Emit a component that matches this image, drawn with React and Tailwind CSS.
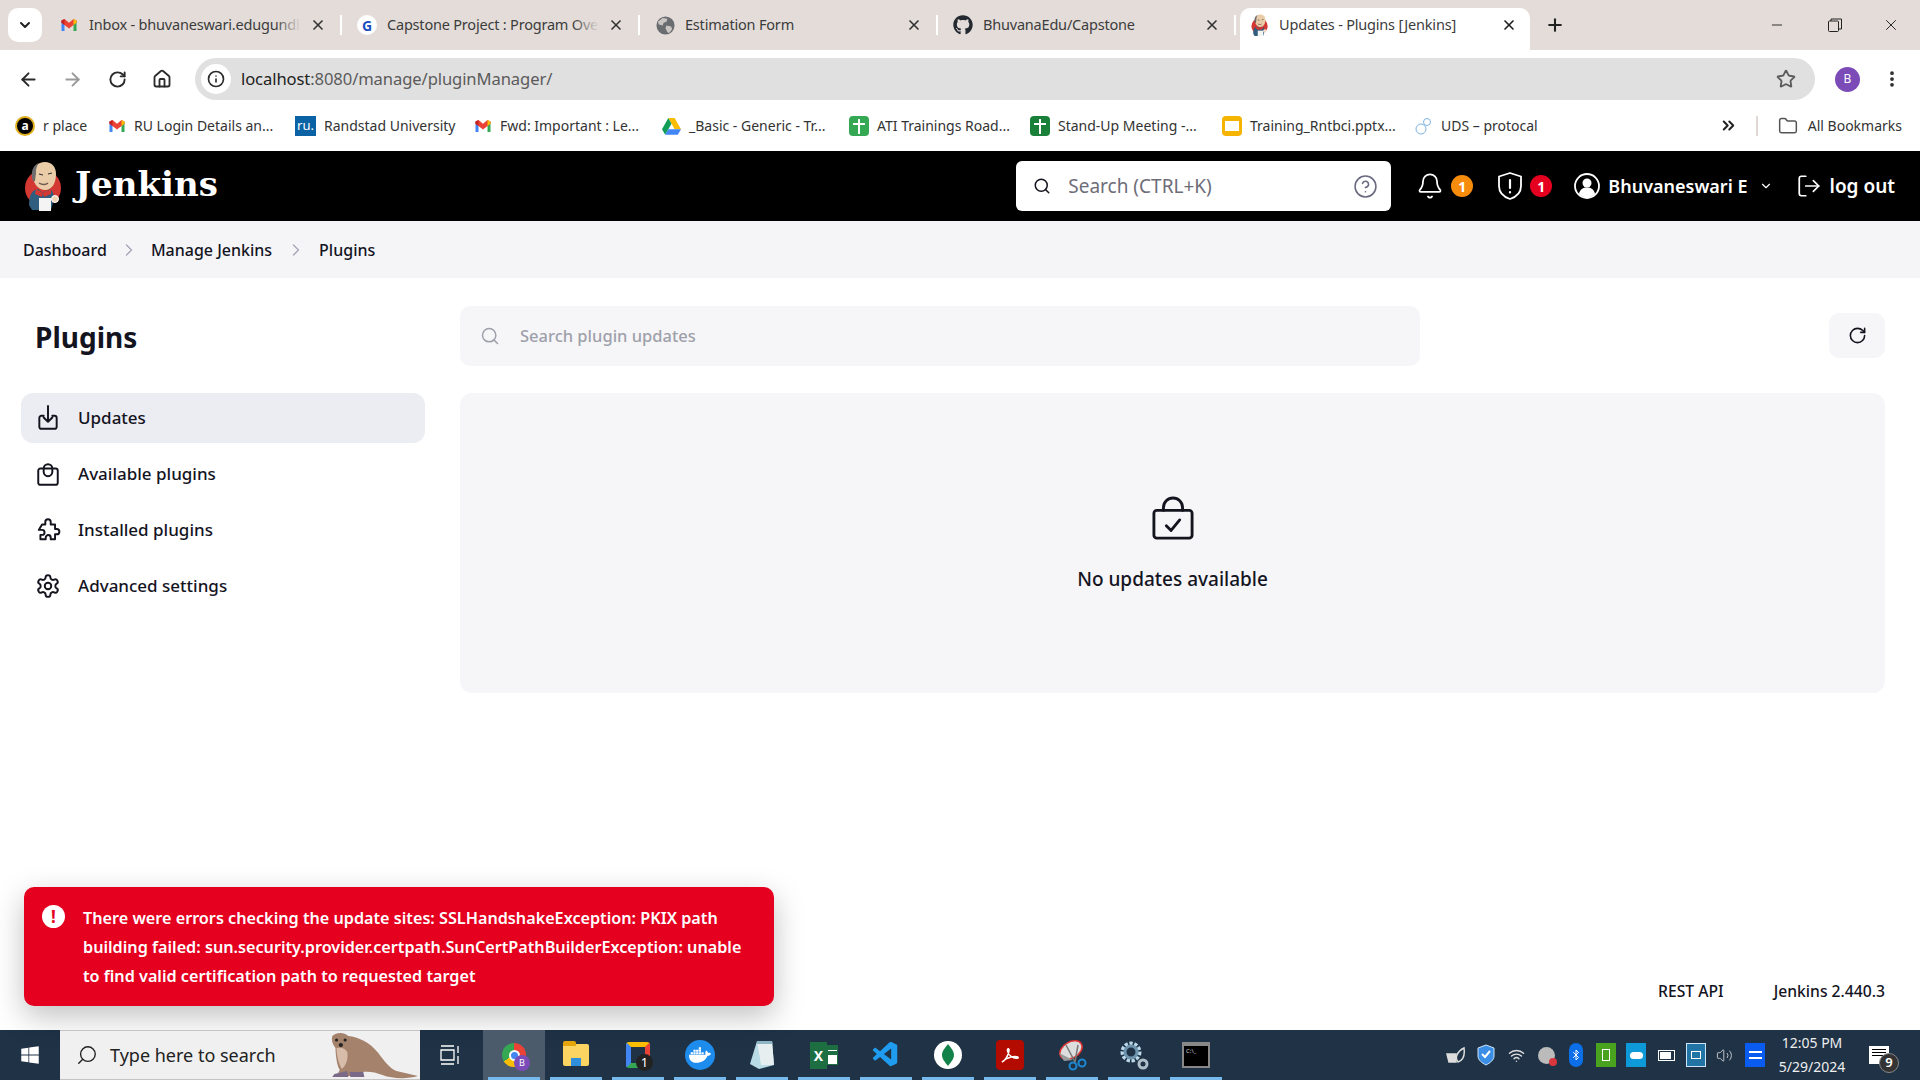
import React from 'react';
import { ArrowLeft, ArrowRight, RotateCw, Home, Info, Star, X, Plus, Minus, ChevronDown, ChevronRight, ChevronsRight, EllipsisVertical, Folder, Search, CircleHelp, Bell, LogOut, Wifi, Volume2, Bluetooth } from 'lucide-react';
import { FaGithub, FaWindows, FaDocker } from 'react-icons/fa';
import { VscVscode } from 'react-icons/vsc';

function GmailIcon({ size = 18 }) {
  return (
    <svg width={size} height={size} viewBox="0 0 24 24" className="shrink-0">
      <path d="M2 6v14h4V10z" fill="#4285f4" />
      <path d="M22 6v14h-4V10z" fill="#34a853" />
      <path d="M2 6l4-2 6 5 6-5 4 2v3l-4 3-6 4.500-6-4.500-4-3z" fill="#ea4335" />
      <path d="M18 4l4 2v3l-4 3z" fill="#fbbc04" />
      <path d="M2 6l4-2v8L2 9z" fill="#c5221f" />
    </svg>
  );
}

function DriveIcon() {
  return (
    <svg width="19" height="18" viewBox="0 0 24 22" className="shrink-0">
      <path d="M8 1h8l8 14h-8z" fill="#fbbc04" />
      <path d="M8 1l-8 14 4 7 8-14z" fill="#0f9d58" />
      <path d="M4 22h16l4-7H8z" fill="#4285f4" />
    </svg>
  );
}

function SheetIcon({ color }) {
  return (
    <div className="w-5 h-5 rounded-sm flex items-center justify-center shrink-0" style={{ background: color }}>
      <svg width="14" height="16" viewBox="0 0 14 16"><path d="M1 6h12M7 1v15" stroke="#fff" strokeWidth="2" fill="none" /></svg>
    </div>
  );
}

function GlobeIcon() {
  return (
    <svg width="19" height="19" viewBox="0 0 20 20">
      <circle cx="10" cy="10" r="9.500" fill="#6a6d70" />
      <path d="M7 2l5 1-1 3-3 1-1 3-4-1-1-3zM11 10l5 1 1 3-3 4-2-1-2-4z" fill="#c9c6c4" />
    </svg>
  );
}

function JenkinsLogo({ size = 40 }) {
  return (
    <svg width={size * 0.95} height={size * 1.25} viewBox="0 0 38 50" className="shrink-0">
      <circle cx="19" cy="27" r="18" fill="#d33833" />
      <path d="M5 44c0-10 3-15 9-16l5 4 7-4c3 2 4 6 4 10l-3 11H8z" fill="#2f5e7e" />
      <path d="M9 16C8 6 14 1 21 1s11 5 11 12c0 9-4 16-11 16-6 0-11-5-12-13z" fill="#eacda8" />
      <path d="M9 20C6 11 9 4 15 2c-3 4-3 7-3 10l-1 8z" fill="#6d6b6d" />
      <path d="M15 22c3 2 7 2 9 0" stroke="#6d5a50" strokeWidth="1.500" fill="none" />
      <path d="M15 13l4 1M24 13l4-1" stroke="#333" strokeWidth="1.200" fill="none" />
      <path d="M12 28l7 4-1 4-7-3zM27 28l-8 4 1 4 7-3z" fill="#d33833" />
      <rect x="15" y="37" width="12" height="13" fill="#f4f4f4" />
      <circle cx="31" cy="38" r="3.500" fill="#f0d6b7" stroke="#fff" />
    </svg>
  );
}

function ChromeTab({ icon, title, faded }) {
  return (
    <div className="w-[298px] h-[30px] flex items-center pl-[15px] pr-[16px] relative">
      <div className="w-[20px] flex justify-center shrink-0">{icon}</div>
      <div className="relative ml-[10px] w-[220px] whitespace-nowrap text-[14.5px] tracking-[-0.2px] text-[#3c3c3c]">
        {title}
        {faded && <div className="absolute top-0 right-[8px] bottom-0 w-[26px] bg-gradient-to-r from-transparent to-[#e3dcd9]" />}
      </div>
      <X size={16} strokeWidth={2.5} className="ml-auto text-[#333]" />
      <div className="absolute right-0 top-[5px] w-[2px] h-[20px] bg-white" />
    </div>
  );
}

function Bookmark({ icon, label, className }) {
  return (
    <div className={`flex items-center gap-[8px] whitespace-nowrap ${className}`}>
      {icon}
      <span>{label}</span>
    </div>
  );
}

function ChromeBar() {
  return (
    <div className="shrink-0 font-['Noto_Sans',sans-serif]">
      <div className="h-[50px] bg-[#e3dcd9] flex relative">
        <div className="mt-[8px] ml-[8px] w-[34px] h-[34px] bg-white rounded-[10px] flex items-center justify-center">
          <ChevronDown size={16} strokeWidth={3} className="text-[#222]" />
        </div>
        <div className="flex mt-[10px] ml-[2px] h-[30px]">
          <ChromeTab icon={<GmailIcon />} title="Inbox - bhuvaneswari.edugundl" faded />
          <ChromeTab icon={<div className="w-[20px] h-[20px] rounded-full bg-white flex items-center justify-center text-[14px] font-bold text-[#1a4fc0]">G</div>} title="Capstone Project : Program Ove" faded />
          <ChromeTab icon={<GlobeIcon />} title="Estimation Form" />
          <ChromeTab icon={<FaGithub size={20} className="text-[#24292f]" />} title="BhuvanaEdu/Capstone" />
        </div>
        <div className="ml-[4px] mt-[8px] w-[290px] h-[42px] pb-[8px] bg-white rounded-t-[10px] flex items-center pl-[11px] pr-[13px]">
          <JenkinsLogo size={18} />
          <span className="ml-[11px] text-[14.5px] tracking-[-0.2px] text-[#3c3c3c] whitespace-nowrap">Updates - Plugins [Jenkins]</span>
          <X size={16} strokeWidth={2.5} className="ml-auto text-[#222]" />
        </div>
        <Plus size={20} strokeWidth={2.5} className="ml-[15px] mt-[15px] text-[#222]" />
        <div className="ml-auto flex h-[30px] mt-[10px] text-[#222]">
          <div className="w-[55px] flex items-center justify-center mr-[3px]"><Minus size={16} strokeWidth={1.4} /></div>
          <div className="w-[55px] flex items-center justify-center">
            <svg width="14" height="14" viewBox="0 0 14 14" fill="none" stroke="#222"><rect x="0.500" y="3" width="10" height="10.500" rx="1" /><path d="M3 3V1h10.500v10H11" /></svg>
          </div>
          <div className="w-[58px] flex items-center justify-center"><X size={18} strokeWidth={1.3} /></div>
        </div>
      </div>
      <div className="h-[50px] bg-white rounded-t-[10px] flex items-center pt-[8px] pl-[18px] pr-[16px] text-[#2b2b2b]">
        <ArrowLeft size={21} strokeWidth={2.2} />
        <ArrowRight size={21} strokeWidth={2.2} className="ml-[23px] text-[#9a9a9a]" />
        <RotateCw size={19} strokeWidth={2.4} className="ml-[25px]" />
        <Home size={20} strokeWidth={2.2} className="ml-[25px]" />
        <div className="ml-[23px] w-[1620px] h-[42px] bg-[#e0e0e0] rounded-full flex items-center pl-[6px] pr-[19px]">
          <div className="w-[30px] h-[30px] rounded-full bg-white flex items-center justify-center"><Info size={18} strokeWidth={2.2} /></div>
          <div className="ml-[10px] text-[16.6px] text-[#5b5b5b] tracking-[-0.1px] pt-[1px]"><span className="text-[#222]">localhost</span>:8080/manage/pluginManager/</div>
          <Star size={20} strokeWidth={2.2} className="ml-auto text-[#5b5b5b]" />
        </div>
        <div className="ml-[20px] w-[25px] h-[25px] rounded-full bg-[#7b4bb8] text-white text-[12px] flex items-center justify-center shrink-0">B</div>
        <EllipsisVertical size={20} strokeWidth={2.5} className="ml-[22px] shrink-0" />
      </div>
      <div className="h-[51px] bg-white flex items-center text-[14px] text-[#333] pl-[15px] pr-[18px]">
        <Bookmark icon={<div className="w-[20px] h-[20px] rounded-full border-2 border-[#e0b020] bg-black text-white text-[12px] flex items-center justify-center font-bold">a</div>} label="r place" className="w-[93px]" />
        <Bookmark icon={<GmailIcon />} label="RU Login Details an..." className="w-[187px]" />
        <Bookmark icon={<div className="w-[21px] h-[20px] bg-[#0b63a5] text-white text-[13px] flex items-center justify-center">ru.</div>} label="Randstad University" className="w-[179px]" />
        <Bookmark icon={<GmailIcon />} label="Fwd: Important : Le..." className="w-[188px]" />
        <Bookmark icon={<DriveIcon />} label="_Basic - Generic - Tr..." className="w-[187px]" />
        <Bookmark icon={<SheetIcon color="#34a853" />} label="ATI Trainings Road..." className="w-[181px]" />
        <Bookmark icon={<SheetIcon color="#188038" />} label="Stand-Up Meeting -..." className="w-[192px]" />
        <Bookmark icon={<div className="w-[20px] h-[20px] rounded-sm bg-[#f4b400] flex items-center justify-center shrink-0"><div className="w-[14px] h-[10px] bg-white" /></div>} label="Training_Rntbci.pptx..." className="w-[193px]" />
        <Bookmark icon={<svg width="18" height="20" viewBox="0 0 18 20" fill="none" stroke="#7fb2de"><circle cx="6" cy="13" r="5" /><circle cx="12" cy="6" r="3.500" /></svg>} label="UDS – protocal" />
        <ChevronsRight size={19} strokeWidth={2.5} className="ml-auto text-[#222]" />
        <div className="ml-[18px] w-[2px] h-[20px] bg-[#e0d8d5]" />
        <Folder size={20} strokeWidth={1.8} className="ml-[20px] text-[#555]" />
        <span className="ml-[10px]">All Bookmarks</span>
      </div>
    </div>
  );
}

function JenkinsHeader() {
  return (
    <div className="h-[70px] shrink-0 bg-black text-white flex items-center pl-[24px] pr-[25px]">
      <JenkinsLogo size={40} />
      <span className="ml-[13px] -mt-[4px] text-[34px] font-bold font-['DejaVu_Serif',serif] leading-none">Jenkins</span>
      <div className="ml-auto w-[375px] h-[50px] bg-white rounded-[6px] flex items-center pl-[17px] pr-[13px] text-[#14141f]">
        <Search size={18} strokeWidth={2} />
        <span className="ml-[17px] text-[19px] text-[#6d6d78]">Search (CTRL+K)</span>
        <CircleHelp size={25} strokeWidth={1.5} className="ml-auto text-[#6a6a80]" />
      </div>
      <Bell size={28} strokeWidth={1.5} className="ml-[25px]" />
      <div className="ml-[7px] w-[22px] h-[22px] rounded-full bg-[#f78c0c] text-[14px] font-bold flex items-center justify-center">1</div>
      <svg width="28" height="30" viewBox="0 0 28 30" fill="none" stroke="#fff" strokeWidth="1.800" strokeLinecap="round" strokeLinejoin="round" className="ml-[23px]">
        <path d="M14 2l11 3.500V15c0 7-5 11-11 13C8 26 3 22 3 15V5.500z" />
        <path d="M14 9v8M14 21v.5" strokeWidth="2.200" />
      </svg>
      <div className="ml-[6px] w-[22px] h-[22px] rounded-full bg-[#e6001f] text-[14px] font-bold flex items-center justify-center">1</div>
      <svg width="26" height="26" viewBox="0 0 26 26" className="ml-[22px]">
        <circle cx="13" cy="13" r="12" fill="none" stroke="#fff" strokeWidth="1.800" />
        <circle cx="13" cy="10" r="4.500" fill="#fff" />
        <path d="M5 21c1-5 4-6.500 8-6.500s7 1.500 8 6.500c-2 2-5 3.500-8 3.500s-6-1.500-8-3.500z" fill="#fff" />
      </svg>
      <span className="ml-[8px] text-[18px] font-semibold whitespace-nowrap">Bhuvaneswari E</span>
      <ChevronDown size={14} strokeWidth={2} className="ml-[11px]" />
      <LogOut size={26} strokeWidth={1.6} className="ml-[23px]" />
      <span className="ml-[8px] text-[19px] font-semibold whitespace-nowrap">log out</span>
    </div>
  );
}

function Breadcrumbs() {
  return (
    <div className="h-[57px] shrink-0 bg-[#f5f5f8] flex items-center pl-[23px] text-[16px] font-medium text-[#14141f]">
      <span>Dashboard</span>
      <ChevronRight size={20} strokeWidth={1.6} className="mx-[12px] text-[#a5a5b8]" />
      <span>Manage Jenkins</span>
      <ChevronRight size={20} strokeWidth={1.6} className="ml-[14px] mr-[13px] text-[#a5a5b8]" />
      <span>Plugins</span>
    </div>
  );
}

const sideItems = [
  {
    label: 'Updates',
    active: true,
    icon: <path d="M8 10H6a2 2 0 0 0-2 2v8a2 2 0 0 0 2 2h12a2 2 0 0 0 2-2v-8a2 2 0 0 0-2-2h-2M12 1v14M8 11.500l4 4 4-4" />,
  },
  {
    label: 'Available plugins',
    icon: <path d="M5 7h14a2 2 0 0 1 2 2v11a2 2 0 0 1-2 2H5a2 2 0 0 1-2-2V9a2 2 0 0 1 2-2zM8 7a4 4 0 0 1 8 0v3a4 4 0 0 1-8 0z" />,
  },
  {
    label: 'Installed plugins',
    icon: <path d="M9.500 4.500a2.500 2.500 0 0 1 5 0V7h4v4h1.500a2.500 2.500 0 0 1 0 5H18.500v4.500H14.500V19a2.300 2.300 0 0 0-4.600 0v1.500H5V16.500h1.500a2.300 2.300 0 0 0 0-4.600H3.500L6.500 7h3z" />,
  },
  {
    label: 'Advanced settings',
    icon: (
      <>
        <path d="M12.200 2h-.4a2 2 0 0 0-2 2v.2a2 2 0 0 1-1 1.700l-.4.300a2 2 0 0 1-2 0l-.2-.1a2 2 0 0 0-2.700.700l-.2.400a2 2 0 0 0 .7 2.700l.2.100a2 2 0 0 1 1 1.700v.500a2 2 0 0 1-1 1.800l-.2.100a2 2 0 0 0-.7 2.700l.2.400a2 2 0 0 0 2.700.700l.2-.1a2 2 0 0 1 2 0l.4.300a2 2 0 0 1 1 1.700v.2a2 2 0 0 0 2 2h.4a2 2 0 0 0 2-2v-.2a2 2 0 0 1 1-1.700l.4-.3a2 2 0 0 1 2 0l.2.100a2 2 0 0 0 2.700-.7l.2-.4a2 2 0 0 0-.7-2.700l-.2-.1a2 2 0 0 1-1-1.800v-.5a2 2 0 0 1 1-1.700l.2-.1a2 2 0 0 0 .7-2.700l-.2-.4a2 2 0 0 0-2.700-.7l-.2.100a2 2 0 0 1-2 0l-.4-.3a2 2 0 0 1-1-1.700V4a2 2 0 0 0-2-2z" />
        <circle cx="12" cy="12" r="3" />
      </>
    ),
  },
];

function Sidebar() {
  return (
    <div className="w-[404px] ml-[21px] shrink-0">
      <h1 className="ml-[14px] mt-[39px] h-[40px] leading-[40px] text-[28px] font-bold text-[#14141f]">Plugins</h1>
      <div className="mt-[36px] flex flex-col gap-[6px]">
        {sideItems.map((item) => (
          <div key={item.label} className={`h-[50px] rounded-[12px] flex items-center pl-[14px] text-[17px] font-medium text-[#14141f] ${item.active ? 'bg-[#ecedf2]' : ''}`}>
            <svg width="26" height="26" viewBox="0 0 24 24" fill="none" stroke="#14141f" strokeWidth="1.800" strokeLinecap="round" strokeLinejoin="round" className="shrink-0">{item.icon}</svg>
            <span className="ml-[17px]">{item.label}</span>
          </div>
        ))}
      </div>
    </div>
  );
}

function MainPanel() {
  return (
    <div className="flex-1 ml-[35px] mr-[35px] pt-[28px]">
      <div className="flex justify-between items-start">
        <div className="w-[960px] h-[60px] bg-[#f6f6f9] rounded-[10px] flex items-center pl-[20px] text-[#9ea0aa]">
          <Search size={20} strokeWidth={1.8} />
          <span className="ml-[20px] text-[16.5px] font-medium">Search plugin updates</span>
        </div>
        <div className="mt-[7px] w-[56px] h-[45px] bg-[#f6f6f9] rounded-[10px] flex items-center justify-center">
          <RotateCw size={19} strokeWidth={2} className="text-[#14141f]" />
        </div>
      </div>
      <div className="mt-[27px] h-[300px] bg-[#f6f6f9] rounded-[12px] flex flex-col items-center pt-[103px]">
        <svg width="42" height="46" viewBox="0 0 44 46" fill="none" stroke="#14141f" strokeWidth="3" strokeLinecap="round" strokeLinejoin="round">
          <path d="M5 14h34a3 3 0 0 1 3 3v23a3 3 0 0 1-3 3H5a3 3 0 0 1-3-3V17a3 3 0 0 1 3-3z" />
          <path d="M12 14V11a10 10 0 0 1 20 0v3" />
          <path d="M15 30l5 5 9-11" />
        </svg>
        <div className="mt-[23px] text-[19px] font-medium text-[#14141f]">No updates available</div>
      </div>
    </div>
  );
}

function ErrorToast() {
  return (
    <div className="absolute left-[24px] top-[887px] w-[750px] h-[119px] bg-[#e6001f] rounded-[10px] shadow-[0_10px_30px_rgba(0,0,0,0.25)] flex pl-[18px] pt-[18px] text-white">
      <div className="w-[23px] h-[23px] rounded-full bg-white text-[#e6001f] flex items-center justify-center text-[17px] font-bold shrink-0">!</div>
      <div className="ml-[18px] w-[672px] -mt-[1px] text-[16.2px] font-semibold leading-[29px]">
        There were errors checking the update sites: SSLHandshakeException: PKIX path building failed: sun.security.provider.certpath.SunCertPathBuilderException: unable to find valid certification path to requested target
      </div>
    </div>
  );
}

function Otter() {
  return (
    <svg width="92" height="50" viewBox="0 0 86 50" preserveAspectRatio="none" className="absolute right-0 top-0">
      <path d="M4 5c4-4 11-4 15 0 9 1 20 6 28 17 5 7 10 15 17 18l20 5c-9 3-24 3-33-1-7-3-13-4-19-3l-8 4H8l3-6C8 34 7 22 7 17 4 13 3 9 4 5z" fill="#a5826b" />
      <path d="M8 17c4-1 8 0 10 4 1 7-1 13-5 17-3-5-5-13-5-21z" fill="#d8bcaa" />
      <path d="M6 43l12-3 1 6H4zM20 41l13 0 1 5H21z" fill="#7a6a88" />
      <circle cx="8" cy="9" r="1.500" fill="#222" />
      <circle cx="16" cy="9" r="1.500" fill="#222" />
      <circle cx="12" cy="14" r="2" fill="#222" />
    </svg>
  );
}

function TaskIcon({ children, active }) {
  return (
    <div className={`w-[62px] h-[50px] flex items-center justify-center relative ${active ? 'bg-[#4b5b6c]' : ''}`}>
      {children}
      <div className="absolute bottom-0 left-[5px] right-[5px] h-[3px] bg-[#76b9ed]" />
    </div>
  );
}

function TrayBox({ className, children }) {
  return <div className={`w-[20px] h-[24px] flex items-center justify-center ${className}`}>{children}</div>;
}

function Taskbar() {
  return (
    <div className="h-[50px] shrink-0 bg-[#1f3246] flex items-center text-white font-['Noto_Sans',sans-serif]">
      <div className="w-[60px] flex justify-center"><FaWindows size={20} /></div>
      <div className="relative w-[360px] h-[50px] bg-[#f0f0f0] border-y border-[#c4c4c4] flex items-center pl-[16px] text-[#222]">
        <Search size={22} strokeWidth={1.5} className="-scale-x-100" />
        <span className="ml-[12px] text-[18px]">Type here to search</span>
        <Otter />
      </div>
      <div className="w-[63px] flex justify-center">
        <svg width="20" height="20" viewBox="0 0 20 20" fill="none" stroke="#fff" strokeWidth="1.300" className="-ml-[4px]"><path d="M1 1h13M1 19h13M1 5h13v10H1zM18 1v7M18 11v8" /></svg>
      </div>
      <TaskIcon active>
        <div className="w-[24px] h-[24px] rounded-full relative bg-[conic-gradient(#ea4335_0_33%,#fbbc04_33%_66%,#34a853_66%)] flex items-center justify-center">
          <div className="w-[11px] h-[11px] rounded-full bg-[#4285f4] border-2 border-white" />
          <div className="absolute -right-[4px] -bottom-[4px] w-[16px] h-[16px] rounded-full bg-[#7b4bb8] text-[9px] flex items-center justify-center">B</div>
        </div>
      </TaskIcon>
      <TaskIcon>
        <div className="w-[26px] h-[22px] bg-[#fcd462] rounded-[2px] relative">
          <div className="absolute -top-[3px] left-0 w-[13px] h-[5px] bg-[#e5a50a] rounded-t-[2px]" />
          <div className="absolute bottom-0 left-[8px] w-[10px] h-[8px] bg-[#2f8fdd]" />
        </div>
      </TaskIcon>
      <TaskIcon>
        <div className="w-[24px] h-[26px] border-[5px] border-t-[#fbbc04] border-r-[#ea4335] border-b-[#34a853] border-l-[#4285f4] rounded-[3px] relative">
          <div className="absolute -right-[8px] -bottom-[8px] w-[17px] h-[17px] rounded-full bg-[#222] text-[13px] flex items-center justify-center">1</div>
        </div>
      </TaskIcon>
      <TaskIcon>
        <div className="w-[30px] h-[30px] rounded-full bg-[#1d8ced] flex items-center justify-center"><FaDocker size={22} /></div>
      </TaskIcon>
      <TaskIcon>
        <svg width="26" height="30" viewBox="0 0 26 30"><path d="M8 1h15l2 24-15 4-9-5z" fill="#b9dbe5" /><path d="M8 1h15l2 24H12z" fill="#e6eef0" /><path d="M8 1h15l.5 3H8z" fill="#8fb5c4" /></svg>
      </TaskIcon>
      <TaskIcon>
        <div className="flex items-center">
          <div className="w-[17px] h-[27px] bg-[#1d6f42] text-[14px] font-bold flex items-center justify-center">X</div>
          <div className="w-[11px] h-[20px] bg-white border border-[#1d6f42] grid grid-cols-1 grid-rows-4 gap-px"><div className="bg-[#1d6f42]" /><div className="bg-[#1d6f42]" /></div>
        </div>
      </TaskIcon>
      <TaskIcon><VscVscode size={30} className="text-[#1f9cf0]" /></TaskIcon>
      <TaskIcon>
        <div className="w-[28px] h-[28px] rounded-full bg-white flex items-center justify-center">
          <svg width="12" height="22" viewBox="0 0 12 22"><path d="M6 0c3 4 6 7 6 11s-3 7-6 11C3 18 0 15 0 11S3 4 6 0z" fill="#13824a" /></svg>
        </div>
      </TaskIcon>
      <TaskIcon>
        <div className="w-[28px] h-[30px] rounded-[4px] bg-[#b30b00] flex items-center justify-center">
          <svg width="20" height="20" viewBox="0 0 20 20" fill="none" stroke="#fff" strokeWidth="1.500"><path d="M2 17c3-1 6-6 7-11 .5-3-2-3-1.500 0C8 10 13 14 18 13c1-1-2-2-7-1-4 1-7 3-9 5z" /></svg>
        </div>
      </TaskIcon>
      <TaskIcon>
        <svg width="30" height="32" viewBox="0 0 30 32" fill="none"><ellipse cx="14" cy="11" rx="12" ry="8" transform="rotate(-30 14 11)" fill="#ddd" stroke="#d33" strokeWidth="1.500" /><path d="M2 14l14 7-9 1z" fill="#999" /><circle cx="16" cy="27" r="3.500" stroke="#1e88d0" strokeWidth="2" /><circle cx="25" cy="24" r="3.500" stroke="#1e88d0" strokeWidth="2" /><path d="M9 6l9 17M21 6l-3 17" stroke="#777" strokeWidth="1.500" /></svg>
      </TaskIcon>
      <TaskIcon>
        <svg width="30" height="30" viewBox="0 0 30 30" fill="none"><circle cx="12" cy="12" r="8" stroke="#bcd9ea" strokeWidth="5" strokeDasharray="3 1.500" /><circle cx="12" cy="12" r="6" stroke="#6e93ad" strokeWidth="3" /><circle cx="24" cy="24" r="4" stroke="#aebfca" strokeWidth="3" /></svg>
      </TaskIcon>
      <TaskIcon>
        <div className="w-[28px] h-[26px] bg-black border-2 border-[#888] border-t-[4px] text-[6px] leading-none pl-[2px] pt-[2px] text-gray-300">C:\_</div>
      </TaskIcon>
      <div className="ml-auto flex items-center gap-[10px]">
        <TrayBox><svg width="20" height="18" viewBox="0 0 20 18" fill="none" stroke="#ddd" strokeWidth="1.500"><path d="M12 16c-3-3-2-10 6-14 1 7 0 12-6 14z" /><path d="M1 8h9v8H3z" fill="#ddd" /></svg></TrayBox>
        <TrayBox><svg width="18" height="22" viewBox="0 0 18 22"><path d="M9 1l8 3v8c0 4-4 7-8 9-4-2-8-5-8-9V4z" fill="#3a8ee6" stroke="#cfe4f7" /><path d="M5 10l3 3 5-6" stroke="#fff" strokeWidth="2" fill="none" /></svg></TrayBox>
        <TrayBox><Wifi size={17} className="text-[#ddd]" /></TrayBox>
        <TrayBox><div className="w-[17px] h-[17px] rounded-full bg-[#bbb] relative"><div className="absolute -right-[2px] -bottom-[2px] w-[8px] h-[8px] bg-[#d9363e] rounded-full" /></div></TrayBox>
        <TrayBox><div className="w-[14px] h-[24px] rounded-full bg-[#0a6fe8] flex items-center justify-center"><Bluetooth size={12} /></div></TrayBox>
        <TrayBox className="bg-[#4aa31e]"><div className="w-[8px] h-[12px] border border-white" /></TrayBox>
        <TrayBox className="bg-[#0e9ad8]"><div className="w-[13px] h-[7px] rounded-full bg-white" /></TrayBox>
        <TrayBox><div className="w-[17px] h-[11px] border border-white flex p-px"><div className="bg-white w-[11px]" /></div></TrayBox>
        <TrayBox className="bg-[#2274a5] border border-[#cfe4f7]"><div className="w-[10px] h-[8px] border border-white" /></TrayBox>
        <Volume2 size={17} strokeWidth={1.2} className="text-[#ddd]" />
        <TrayBox className="bg-[#0a5cf0] ml-[2px]"><div className="w-[13px] h-[8px] border-y-2 border-white" /></TrayBox>
        <div className="w-[74px] text-center text-[14px] leading-[24px] text-[#eee] whitespace-nowrap">
          <div>12:05 PM</div>
          <div>5/29/2024</div>
        </div>
        <div className="w-[78px] -ml-[17px] flex justify-center relative">
          <div className="w-[20px] h-[18px] bg-white flex flex-col gap-[2px] pt-[3px] px-[3px] -ml-[5px]"><div className="h-px bg-black" /><div className="h-px bg-black" /><div className="h-px bg-black" /></div>
          <div className="absolute left-[37px] top-[7px] w-[20px] h-[20px] rounded-full bg-[#333] border border-[#888] text-[13px] font-semibold flex items-center justify-center">9</div>
        </div>
      </div>
    </div>
  );
}

export default function App() {
  return (
    <div className="relative w-[1920px] h-[1080px] overflow-hidden flex flex-col bg-white font-['Noto_Sans',sans-serif]">
      <ChromeBar />
      <JenkinsHeader />
      <Breadcrumbs />
      <div className="flex-1 flex flex-col">
        <div className="flex flex-1">
          <Sidebar />
          <MainPanel />
        </div>
        <div className="h-[78px] flex justify-end gap-[50px] pr-[35px] pt-[28px] text-[15.7px] font-medium text-[#14141f]">
          <span>REST API</span>
          <span>Jenkins 2.440.3</span>
        </div>
      </div>
      <ErrorToast />
      <Taskbar />
    </div>
  );
}
